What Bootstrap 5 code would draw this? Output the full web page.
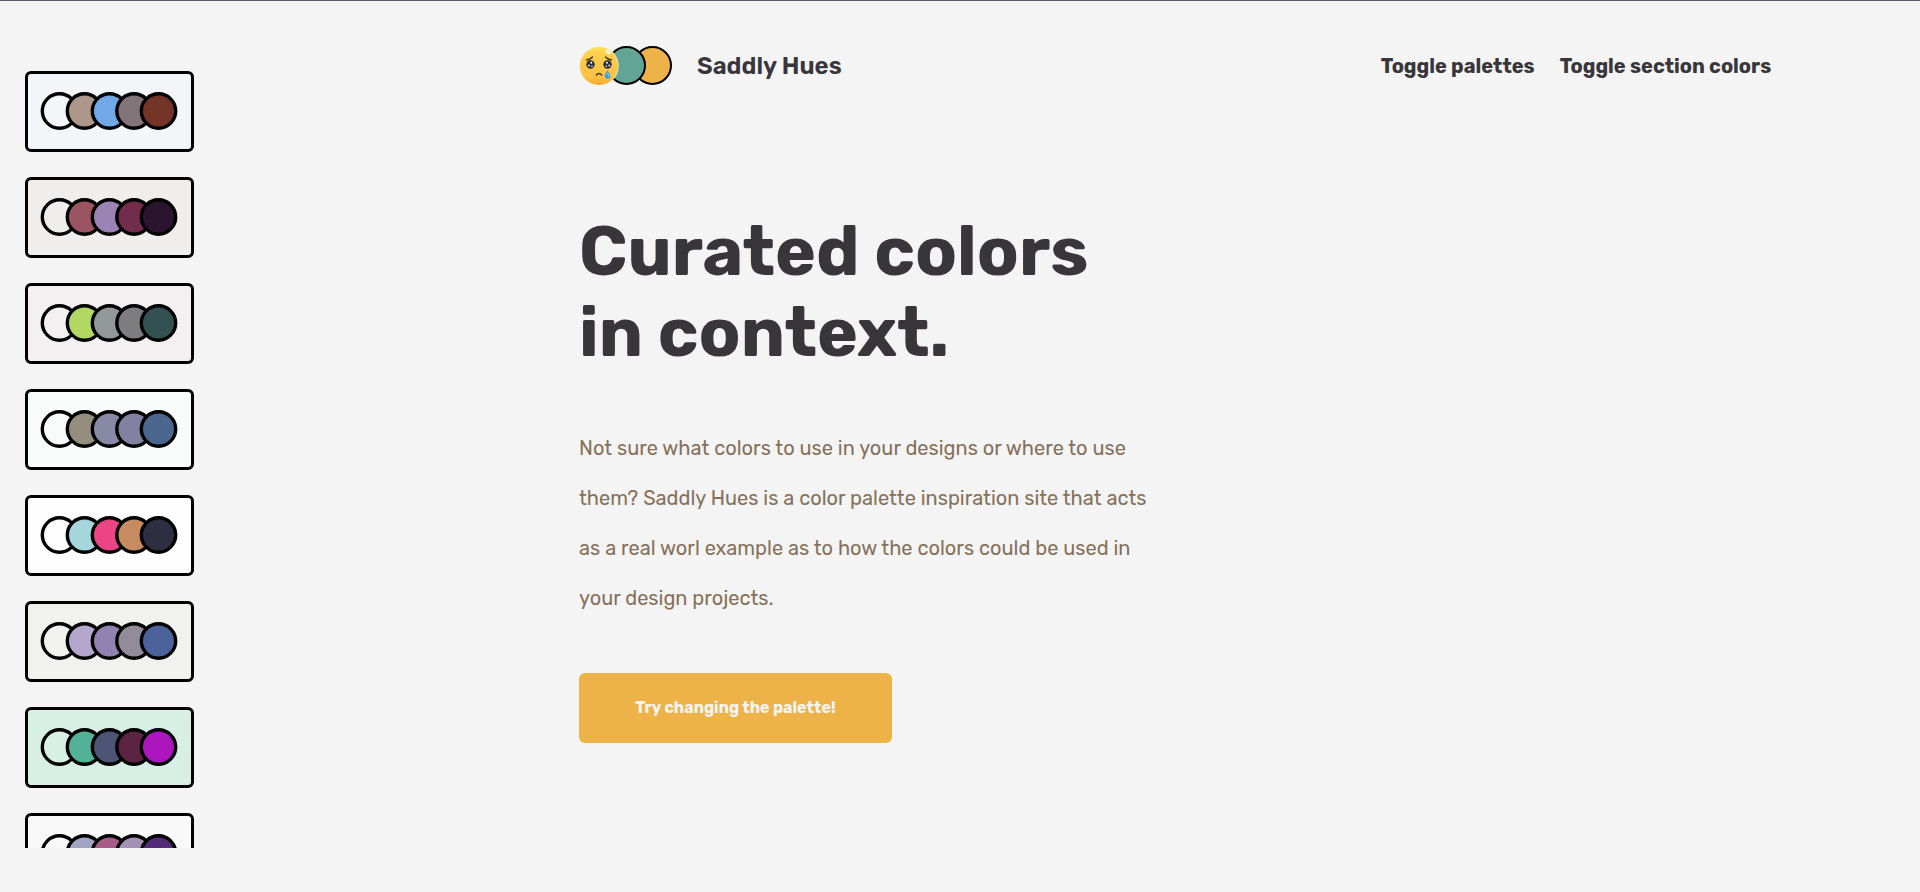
<!DOCTYPE html>
<html lang="en">
<head>
<meta charset="utf-8">
<meta name="viewport" content="width=device-width, initial-scale=1">
<title>Saddly Hues</title>
<link href="https://cdn.jsdelivr.net/npm/bootstrap@5.3.0/dist/css/bootstrap.min.css" rel="stylesheet">
<style>
  body {
    background: #f4f4f4;
    color: #38353b;
    font-family: Rubik, Inter, sans-serif;
    border-top: 1px solid #5f5a61;
  }
  .shell { height: calc(100vh - 1px); overflow: hidden; }
  .palettes {
    width: 219px;
    height: calc(100vh - 45px);
    padding: 70px 25px 0;
    gap: 25px;
    overflow: hidden;
  }
  .palette {
    height: 81px;
    border: 3px solid #000;
    border-radius: 6px;
    padding: 0 13px;
  }
  .palette svg { width: 137px; height: 39px; display: block; overflow: visible; }
  .palette circle { stroke: #000; stroke-width: 3.4px; }
  .content { padding-left: 18.75vw; padding-right: 7.75vw; }
  .topbar { padding-top: 44px; }
  .topbar nav { gap: 25px; }
  .logo { width: 94px; height: 42px; }
  .site-name { font-size: 24px; line-height: 30px; font-weight: 600; }
  .link-btn { font-size: 20px; line-height: 30px; font-weight: 700; }
  .link-btn, .site-name { color: #38353b; }
  .hero-title { font-size: 69px; line-height: 81px; font-weight: 700; color: #38353b; margin-top: 124px; }
  .hero-text { font-size: 20px; line-height: 50px; max-width: 580px; color: #85705a; margin-top: 50px; }
  .hero-btn {
    width: 313px; height: 70px;
    margin-top: 50px;
    background: #edb348; color: #f4f4f4;
    font-size: 16px; font-weight: 700;
    border: 0; border-radius: 6px;
  }
  .hero-btn:hover { background: #e0a63c; color: #f4f4f4; }
</style>
</head>
<body>
<div class="shell d-flex">
  <aside class="palettes d-flex flex-column flex-shrink-0" aria-label="Palettes" id="palettes"></aside>
  <div class="content flex-grow-1">
    <header class="topbar d-flex justify-content-between align-items-center">
      <a href="#" class="d-flex align-items-center text-decoration-none">
        <svg class="logo" viewBox="0 0 94 42" aria-hidden="true">
          <defs>
            <linearGradient id="face" x1="0" y1="0" x2="0" y2="1">
              <stop offset="0" stop-color="#ffe254"/><stop offset=".2" stop-color="#ffce4d"/>
              <stop offset=".8" stop-color="#ffc043"/><stop offset="1" stop-color="#ffa92e"/>
            </linearGradient>
          </defs>
          <circle cx="73.5" cy="20.5" r="18.5" fill="#edb348" stroke="#000" stroke-width="2"/>
          <circle cx="47.5" cy="20.5" r="18.5" fill="#63a595" stroke="#000" stroke-width="2"/>
          <circle cx="20" cy="21" r="19.7" fill="#f7efe0"/>
          <circle cx="20" cy="21" r="19" fill="url(#face)"/>
          <ellipse cx="29" cy="7" rx="3" ry="1.6" fill="#fff" opacity=".9" transform="rotate(38 29 7)"/>
          <g fill="none" stroke="#3d3326" stroke-width="1.3" stroke-linecap="round">
            <path d="M7.5 15q4-.5 6-3M32.5 15q-4-.5-6-3"/>
            <path d="M17.3 30q2.7-3 5.4 0" stroke-width="1.6"/>
          </g>
          <circle cx="11.5" cy="19.5" r="4.2" fill="#262f38"/><circle cx="28.5" cy="19.5" r="4.2" fill="#262f38"/>
          <g fill="#fff"><circle cx="12.3" cy="17.8" r="1"/><circle cx="10" cy="20.5" r=".9"/><circle cx="13" cy="21.3" r=".8"/>
          <circle cx="28" cy="17.8" r="1"/><circle cx="30.3" cy="20.5" r=".9"/><circle cx="27.3" cy="21.3" r=".8"/></g>
          <path d="M28.5 25c1 2.5 2.8 4 2.8 6a2.8 2.8 0 0 1-5.6 0c0-2 1.8-3.5 2.8-6z" fill="#2fa5dc"/>
          <path d="M28.5 28c.5 1.2 1.2 2 1.2 3.2" fill="none" stroke="#a5e4fa" stroke-width="1"/>
        </svg>
        <span class="site-name ms-4">Saddly Hues</span>
      </a>
      <nav class="d-flex" aria-label="Main">
        <button type="button" class="btn link-btn p-0 border-0">Toggle palettes</button>
        <button type="button" class="btn link-btn p-0 border-0">Toggle section colors</button>
      </nav>
    </header>
    <main>
      <h1 class="hero-title mb-0">Curated colors<br>in context.</h1>
      <p class="hero-text mb-0">Not sure what colors to use in your designs or where to use them? Saddly Hues is a color palette inspiration site that acts as a real worl example as to how the colors could be used in your design projects.</p>
      <button type="button" class="btn hero-btn">Try changing the palette!</button>
    </main>
  </div>
</div>
<script>
  const palettes = [
    ['#f3f5f8', '#ad978b', '#71a9e8', '#83747a', '#753428'],
    ['#efeeec', '#9b5562', '#9b83b4', '#722d4c', '#2c1330'],
    ['#f3f0f1', '#b0d863', '#929799', '#7d7c7e', '#335153'],
    ['#f8fbfa', '#958e80', '#888aa5', '#8182a1', '#4b668f'],
    ['#fdfdfd', '#a6d6dc', '#ec4586', '#c68b60', '#2d2e42'],
    ['#f1f1ef', '#b5a6cd', '#9182b0', '#948b9a', '#4b629b'],
    ['#d8efe6', '#53b198', '#4e5476', '#5b2442', '#ab17bd'],
    ['#f9f9f9', '#a0a4c0', '#a65c86', '#a391b6', '#532b77']
  ];
  const centers = [18.5, 43.5, 68.5, 93, 117.5];
  document.getElementById('palettes').innerHTML = palettes.map((colors, i) =>
    `<button type="button" class="palette d-flex align-items-center flex-shrink-0" aria-label="Palette ${i + 1}" style="background:${colors[0]}">
      <svg viewBox="0 0 137 39">${colors.map((c, n) => `<circle cx="${centers[n]}" cy="19" r="17.2" fill="${c}"/>`).join('')}</svg>
    </button>`).join('');
</script>
<script src="https://cdn.jsdelivr.net/npm/bootstrap@5.3.0/dist/js/bootstrap.bundle.min.js"></script>
</body>
</html>
